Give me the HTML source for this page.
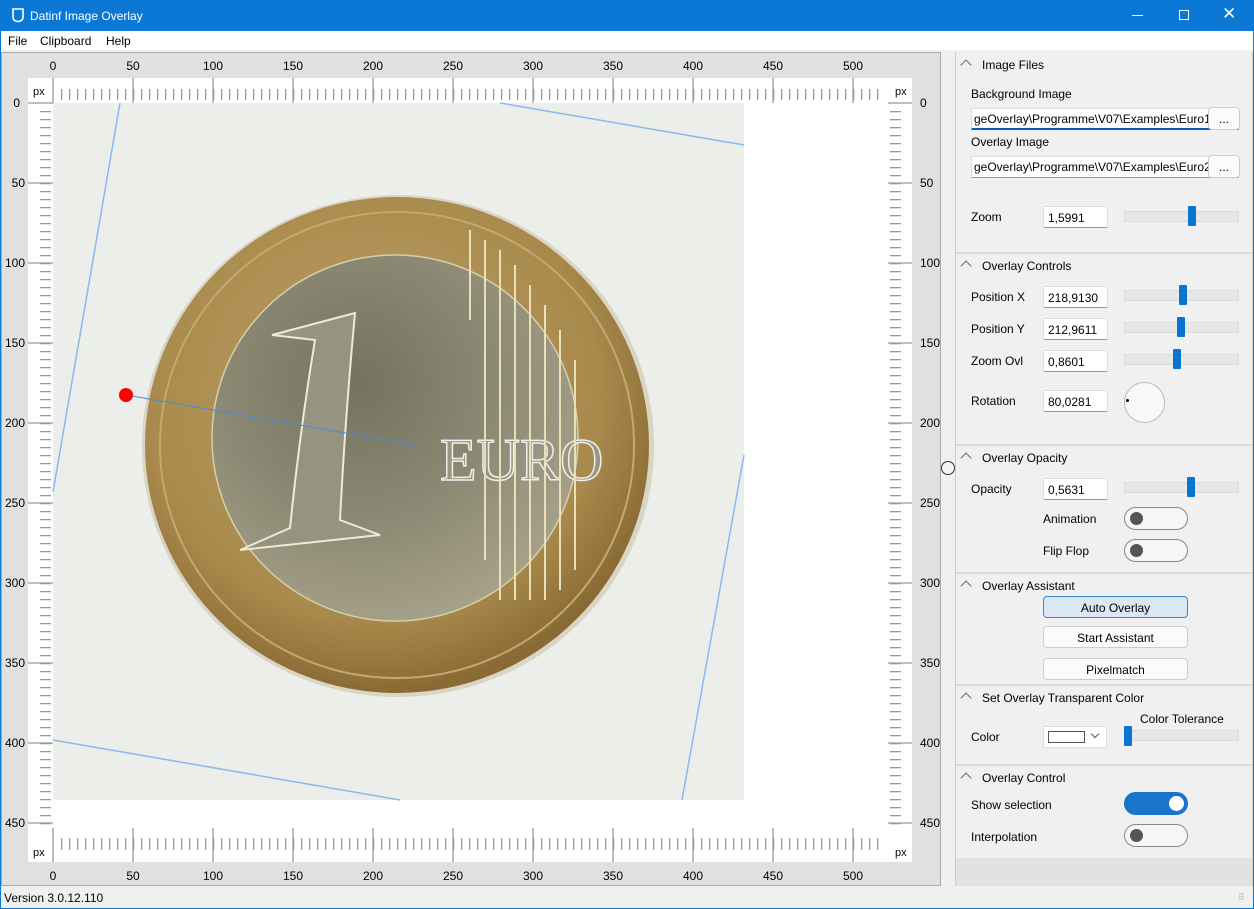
<!DOCTYPE html>
<html><head><meta charset="utf-8"><style>
*{box-sizing:border-box}
body{margin:0;width:1254px;height:909px;overflow:hidden;font-family:"Liberation Sans",sans-serif;font-size:12px;color:#000;background:#f0f0f0;position:relative}
.a{position:absolute}
.title{left:0;top:0;width:1254px;height:31px;background:#0a78d4;color:#fff}
.menu{left:1px;top:31px;width:1252px;height:19px;background:#fff}
.lbl{position:absolute;white-space:nowrap}
.tb{position:absolute;width:65px;height:22px;background:#fff;border:1px solid #ddd;border-bottom:1px solid #999;padding:4px 0 0 4px;border-radius:2px}
.tr{position:absolute;left:1124px;width:115px;height:11px;background:#e6e8e8;border:1px solid #dcdcdc}
.th{position:absolute;width:8px;height:20px;background:#0a74d0;top:-6px;border-radius:1px}
.hd{position:absolute;left:982px}
.chev{position:absolute;left:962px;width:8px;height:8px;border-left:1.2px solid #666;border-top:1.2px solid #666;transform:rotate(45deg)}
.sep{position:absolute;left:956px;width:296px;height:2px;background:#dadada}
.tg{position:absolute;left:1124px;width:64px;height:23px;border:1px solid #888;border-radius:12px;background:#f6f6f6}
.tg i{position:absolute;left:5px;top:4px;width:13px;height:13px;border-radius:50%;background:#555}
.bt{position:absolute;left:1043px;width:145px;height:22px;border:1px solid #ccc;border-radius:4px;background:#fbfbfb;text-align:center;padding-top:4px}
</style></head><body>
<div class="a title">
<svg class="a" style="left:11px;top:7px" width="14" height="16"><path d="M2 2h10v8c0 3-2.5 4.5-5 4.5S2 13 2 10z" fill="none" stroke="#fff" stroke-width="1.6"/></svg>
<div class="lbl" style="left:30px;top:9px;font-size:12px">Datinf Image Overlay</div>
<div class="a" style="left:1132px;top:15px;width:11px;height:1px;background:#fff"></div>
<div class="a" style="left:1179px;top:10px;width:10px;height:10px;border:1px solid #fff"></div>
<div class="lbl" style="left:1222px;top:4px;font-size:17px">✕</div>
</div>
<div class="a menu"><span class="lbl" style="left:7px;top:3px">File</span><span class="lbl" style="left:39px;top:3px">Clipboard</span><span class="lbl" style="left:105px;top:3px">Help</span></div>

<div class="a" style="left:1px;top:52px;width:940px;height:834px;background:#e0e0e0;border:1px solid #aaa"></div>
<svg class="a" style="left:0;top:0" width="945" height="886">
<defs>
<pattern id="hm" x="53" y="0" width="8" height="900" patternUnits="userSpaceOnUse"><rect x="0" y="0" width="1.3" height="900" fill="#999"/></pattern>
<pattern id="vm" x="0" y="103" width="900" height="8" patternUnits="userSpaceOnUse"><rect x="0" y="0" width="900" height="1.3" fill="#999"/></pattern>
<radialGradient id="gold" cx="45%" cy="40%" r="60%"><stop offset="0" stop-color="#bca068"/><stop offset="0.75" stop-color="#a98a4c"/><stop offset="1" stop-color="#8a6a34"/></radialGradient>
<radialGradient id="silv" cx="40%" cy="35%" r="70%"><stop offset="0" stop-color="#75735f"/><stop offset="0.5" stop-color="#8a8772"/><stop offset="1" stop-color="#a8a38a"/></radialGradient>
</defs>
<rect x="28" y="78" width="860" height="25" fill="#fff"/>
<rect x="28" y="828" width="860" height="34" fill="#fff"/>
<rect x="28" y="78" width="25" height="784" fill="#fff"/>
<rect x="888" y="78" width="24" height="784" fill="#fff"/>
<rect x="53" y="103" width="835" height="725" fill="#fff"/>
<rect x="53" y="103" width="691" height="697" fill="#eceeea"/>
<rect x="57" y="89" width="828" height="11" fill="url(#hm)"/>
<rect x="57" y="838" width="828" height="12" fill="url(#hm)"/>
<rect x="40" y="107" width="11" height="718" fill="url(#vm)"/>
<rect x="890" y="107" width="11" height="718" fill="url(#vm)"/>
<g stroke="#999" stroke-width="1.3">
<path d="M53 78V103M133 78V103M213 78V103M293 78V103M373 78V103M453 78V103M533 78V103M613 78V103M693 78V103M773 78V103M853 78V103"/>
<path d="M53 828V862M133 828V862M213 828V862M293 828V862M373 828V862M453 828V862M533 828V862M613 828V862M693 828V862M773 828V862M853 828V862"/>
<path d="M28 103H53M28 183H53M28 263H53M28 343H53M28 423H53M28 503H53M28 583H53M28 663H53M28 743H53M28 823H53"/>
<path d="M888 103H912M888 183H912M888 263H912M888 343H912M888 423H912M888 503H912M888 583H912M888 663H912M888 743H912M888 823H912"/>
</g>
<g font-family="Liberation Sans" font-size="12" text-anchor="middle" fill="#000">
<text x="53" y="70">0</text><text x="133" y="70">50</text><text x="213" y="70">100</text><text x="293" y="70">150</text><text x="373" y="70">200</text><text x="453" y="70">250</text><text x="533" y="70">300</text><text x="613" y="70">350</text><text x="693" y="70">400</text><text x="773" y="70">450</text><text x="853" y="70">500</text>
<text x="53" y="880">0</text><text x="133" y="880">50</text><text x="213" y="880">100</text><text x="293" y="880">150</text><text x="373" y="880">200</text><text x="453" y="880">250</text><text x="533" y="880">300</text><text x="613" y="880">350</text><text x="693" y="880">400</text><text x="773" y="880">450</text><text x="853" y="880">500</text>
</g>
<g font-family="Liberation Sans" font-size="12" text-anchor="end">
<text x="20" y="107">0</text><text x="25" y="187">50</text><text x="25" y="267">100</text><text x="25" y="347">150</text><text x="25" y="427">200</text><text x="25" y="507">250</text><text x="25" y="587">300</text><text x="25" y="667">350</text><text x="25" y="747">400</text><text x="25" y="827">450</text>
</g>
<g font-family="Liberation Sans" font-size="12">
<text x="920" y="107">0</text><text x="920" y="187">50</text><text x="920" y="267">100</text><text x="920" y="347">150</text><text x="920" y="427">200</text><text x="920" y="507">250</text><text x="920" y="587">300</text><text x="920" y="667">350</text><text x="920" y="747">400</text><text x="920" y="827">450</text>
<text x="33" y="95" font-size="11">px</text><text x="895" y="95" font-size="11">px</text><text x="33" y="856" font-size="11">px</text><text x="895" y="856" font-size="11">px</text>
</g>
<ellipse cx="398" cy="446" rx="256" ry="251" fill="#d9d4c4"/>
<ellipse cx="397" cy="445" rx="252" ry="248" fill="url(#gold)"/>
<ellipse cx="397" cy="445" rx="237" ry="233" fill="none" stroke="#c4a86e" stroke-width="2"/>
<circle cx="395" cy="438" r="183" fill="url(#silv)"/>
<circle cx="395" cy="438" r="183" fill="none" stroke="#d6cfa8" stroke-width="1.5"/>
<path d="M272 335L355 313Q345 420 340 520L380 535L240 550L290 528Q300 430 315 340Z" fill="#969380" stroke="#eeead5" stroke-width="2"/>
<text x="440" y="480" font-family="Liberation Serif" font-size="60" fill="#9a957c" stroke="#eee" stroke-width="1.5">EURO</text>
<g stroke="#e9dfb8" stroke-width="2"><path d="M470 230V320M485 240V560M500 250V600M515 265V600M530 285V600M545 305V600M560 330V590M575 360V570"/></g>
<g stroke="#8ab8f0" stroke-width="1.5" fill="none"><path d="M120 103L53 492M500 103L744 145M744 455L682 800M53 740L400 800"/></g>
<path d="M126 395L415 445" stroke="#4a8ad8" stroke-width="1"/>
<circle cx="126" cy="395" r="7" fill="#f00"/>
</svg>
<div class="a" style="left:941px;top:461px;width:14px;height:14px;border:1px solid #333;border-radius:50%;background:#f4f4f4"></div>

<div class="a" style="left:955px;top:52px;width:298px;height:834px;background:#f0f0f0;border-left:1px solid #ccc;border-right:1px solid #ccc"></div>
<div class="a" style="left:956px;top:858px;width:296px;height:28px;background:#e2e2e2"></div>
<div class="chev" style="top:61px"></div><div class="lbl hd" style="top:58px">Image Files</div>
<div class="lbl" style="left:971px;top:87px">Background Image</div>
<div class="a" style="left:971px;top:108px;width:268px;height:22px;background:#fff;border:1px solid #ddd;border-bottom:2px solid #0a5fb4"></div>
<div class="lbl" style="left:974px;top:112px">geOverlay\Programme\V07\Examples\Euro1</div>
<div class="a" style="left:1208px;top:107px;width:32px;height:23px;background:#fbfbfb;border:1px solid #ccc;border-radius:4px;text-align:center;padding-top:4px">...</div>
<div class="lbl" style="left:971px;top:135px">Overlay Image</div>
<div class="a" style="left:971px;top:156px;width:268px;height:22px;background:#fff;border:1px solid #ddd;border-bottom:1px solid #999"></div>
<div class="lbl" style="left:974px;top:160px">geOverlay\Programme\V07\Examples\Euro2</div>
<div class="a" style="left:1208px;top:155px;width:32px;height:23px;background:#fbfbfb;border:1px solid #ccc;border-radius:4px;text-align:center;padding-top:4px">...</div>
<div class="lbl" style="left:971px;top:210px">Zoom</div><div class="tb" style="left:1043px;top:206px">1,5991</div>
<div class="tr" style="top:211px"><div class="th" style="left:63px"></div></div>
<div class="sep" style="top:252px"></div>

<div class="chev" style="top:262px"></div><div class="lbl hd" style="top:259px">Overlay Controls</div>
<div class="lbl" style="left:971px;top:290px">Position X</div><div class="tb" style="left:1043px;top:286px">218,9130</div>
<div class="tr" style="top:290px"><div class="th" style="left:54px"></div></div>
<div class="lbl" style="left:971px;top:322px">Position Y</div><div class="tb" style="left:1043px;top:318px">212,9611</div>
<div class="tr" style="top:322px"><div class="th" style="left:52px"></div></div>
<div class="lbl" style="left:971px;top:354px">Zoom Ovl</div><div class="tb" style="left:1043px;top:350px">0,8601</div>
<div class="tr" style="top:354px"><div class="th" style="left:48px"></div></div>
<div class="lbl" style="left:971px;top:394px">Rotation</div><div class="tb" style="left:1043px;top:390px">80,0281</div>
<div class="a" style="left:1124px;top:382px;width:41px;height:41px;border-radius:50%;background:#f8f8f8;border:1px solid #bbb"></div>
<div class="a" style="left:1126px;top:399px;width:3px;height:3px;border-radius:50%;background:#000"></div>
<div class="sep" style="top:444px"></div>

<div class="chev" style="top:454px"></div><div class="lbl hd" style="top:451px">Overlay Opacity</div>
<div class="lbl" style="left:971px;top:482px">Opacity</div><div class="tb" style="left:1043px;top:478px">0,5631</div>
<div class="tr" style="top:482px"><div class="th" style="left:62px"></div></div>
<div class="lbl" style="left:1043px;top:512px">Animation</div><div class="tg" style="top:507px"><i></i></div>
<div class="lbl" style="left:1043px;top:544px">Flip Flop</div><div class="tg" style="top:539px"><i></i></div>
<div class="sep" style="top:572px"></div>

<div class="chev" style="top:582px"></div><div class="lbl hd" style="top:579px">Overlay Assistant</div>
<div class="bt" style="top:596px;background:#dbe7f3;border-color:#3c85d2">Auto Overlay</div>
<div class="bt" style="top:626px">Start Assistant</div>
<div class="bt" style="top:658px">Pixelmatch</div>
<div class="sep" style="top:684px"></div>

<div class="chev" style="top:694px"></div><div class="lbl hd" style="top:691px">Set Overlay Transparent Color</div>
<div class="lbl" style="left:1140px;top:712px">Color Tolerance</div>
<div class="lbl" style="left:971px;top:730px">Color</div>
<div class="a" style="left:1043px;top:726px;width:64px;height:22px;background:#fff;border:1px solid #ddd"></div>
<div class="a" style="left:1048px;top:731px;width:37px;height:12px;border:1px solid #555;background:#fff"></div>
<div class="a" style="left:1092px;top:731px;width:6px;height:6px;border-right:1px solid #555;border-bottom:1px solid #555;transform:rotate(45deg)"></div>
<div class="tr" style="top:730px"><div class="th" style="left:-1px;top:-5px"></div></div>
<div class="sep" style="top:764px"></div>

<div class="chev" style="top:774px"></div><div class="lbl hd" style="top:771px">Overlay Control</div>
<div class="lbl" style="left:971px;top:798px">Show selection</div>
<div class="tg" style="top:792px;background:#1a74cc;border-color:#1a74cc"><i style="left:44px;top:3px;width:15px;height:15px;background:#fff"></i></div>
<div class="lbl" style="left:971px;top:830px">Interpolation</div><div class="tg" style="top:824px"><i></i></div>

<div class="a" style="left:0;top:886px;width:1254px;height:23px;background:#f0f0f0;border-left:1px solid #0a78d4;border-right:1px solid #0a78d4;border-bottom:1px solid #0a78d4"></div>
<div class="lbl" style="left:4px;top:891px">Version 3.0.12.110</div>
<div class="lbl" style="left:1238px;top:892px;color:#aaa;font-size:9px">⠿</div>
<div class="a" style="left:0;top:31px;width:1px;height:878px;background:#0a78d4"></div>
<div class="a" style="left:1253px;top:31px;width:1px;height:878px;background:#0a78d4"></div>
</body></html>
